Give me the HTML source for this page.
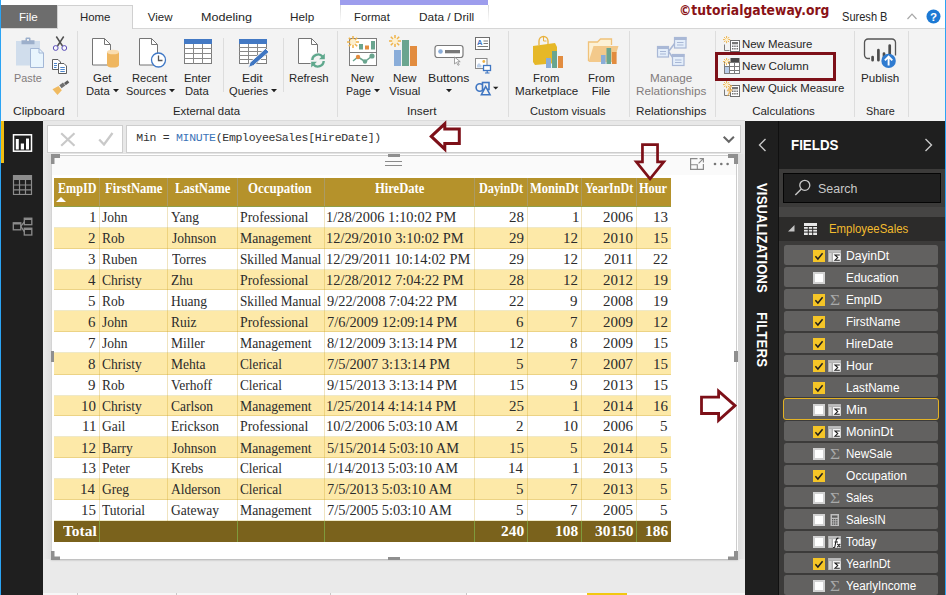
<!DOCTYPE html>
<html lang="en">
<head>
<meta charset="utf-8">
<title>Power BI Desktop - MINUTE function</title>
<style>
*{box-sizing:border-box;margin:0;padding:0}
html,body{width:946px;height:595px;overflow:hidden;background:#eaeaea}
body{position:relative;font-family:"Liberation Sans",sans-serif;font-size:12px;color:#262626}
#app{position:absolute;left:0;top:0;width:946px;height:595px;overflow:hidden}
#app div,#app span,#app svg{position:absolute}
.t{white-space:pre;line-height:20px;height:20px;transform-origin:0 50%}
.t b{font-weight:normal;color:#3b74b8}
/* ---------- ribbon ---------- */
#tabbar{left:0;top:0;width:946px;height:28px;background:#fff}
#tabline{left:0;top:28px;width:946px;height:1px;background:#d6d6d6}
#ribbon{left:0;top:29px;width:946px;height:92px;background:#f3f3f3}
#ribline{left:43px;top:120px;width:702px;height:1px;background:#dcdcdc}
#winl{left:0;top:0;width:1px;height:595px;background:#2ba4f4;z-index:50}
#winr{left:945px;top:0;width:1px;height:595px;background:#2ba4f4;z-index:50}
#t-file{left:1px;top:5px;width:56px;height:23px;background:#6d6d6d}
#t-home{left:57px;top:5px;width:76px;height:24px;background:#f3f3f3;border:1px solid #d0d0d0;border-bottom:none}
#ctx{left:340px;top:0;width:148px;height:5px;background:#9d9ded}
#ctxl{left:340px;top:5px;width:1px;height:18px;background:linear-gradient(#d8d8d8,#fff)}
#ctxr{left:488px;top:5px;width:1px;height:18px;background:linear-gradient(#d8d8d8,#fff)}
.sep{top:31px;width:1px;height:86px;background:#dddddd}
.sep2{top:38px;width:1px;height:54px;background:#dddddd}
#hl{left:715px;top:52px;width:121px;height:29px;border:3px solid #7d1018}
/* ---------- left nav ---------- */
#nav{left:1px;top:121px;width:42px;height:474px;background:#1f1f1f}
#navsel{left:1px;top:121px;width:3px;height:42px;background:#f0bd13}
/* ---------- formula ---------- */
#fbg{left:43px;top:121px;width:702px;height:33px;background:#e8e8e8}
#fx1{left:47px;top:125px;width:76px;height:28px;background:#fff;border:1px solid #cdcdcd}
#fx2{left:126px;top:125px;width:615px;height:28px;background:#fff;border:1px solid #cdcdcd}
/* ---------- canvas ---------- */
#page{left:43px;top:154px;width:702px;height:441px;background:#eaeaea}
#vis{left:51px;top:154px;width:687px;height:405px;background:#fff;box-shadow:0 1px 2px rgba(0,0,0,.25)}
#vish{left:52px;top:155px;width:684px;height:20px;background:#fafafa}
.hd{background:#8f8f8f}
/* table */
.th-bg{left:54px;top:178px;width:617px;height:29px;background:#b5922b;border-bottom:1px solid #8f9f48}
.alt{left:54px;width:617px;background:#fde9a8}
.tot{left:54px;width:617px;height:21px;background:#7a621c}
.vl{top:207px;width:1px;height:314px;background:rgba(196,150,10,.26)}
.hw{left:54px;width:617px;height:1px;background:#efe9c8}
.hb{left:54px;width:617px;height:1px;background:#ecd385}
.vlh{top:178px;width:1px;height:28px;background:#ab9b64}
.vlt{width:1px;height:21px;background:#7f9a3c}
.sort{left:56px;top:197px;width:0;height:0;border-left:5px solid transparent;border-right:5px solid transparent;border-bottom:5px solid #fff}
/* ---------- right panels ---------- */
#viz{left:745px;top:121px;width:33px;height:474px;background:#1f1f1f}
#vdiv{left:778px;top:121px;width:1px;height:474px;background:#101010}
#fp{left:779px;top:121px;width:167px;height:474px;background:#3c3b3a}
#fh{left:779px;top:121px;width:167px;height:48px;background:#1f1f1f}
#sb{left:783px;top:173px;width:158px;height:30px;background:#1f1f1f;border:1px solid #050505}
#fband{left:779px;top:207px;width:167px;height:10px;background:#464544}
#frow{left:779px;top:217px;width:167px;height:24px;background:#2c2b2a}
.vt{color:#fff;font-weight:bold;white-space:nowrap;transform-origin:0 0;height:20px;line-height:20px}
.fld{left:784px;width:154px;height:20px;background:#626160;border-radius:2.5px}
.fld.sel{border:1px solid #e3b224;left:783px;width:156px;height:22px;margin-top:-1px;border-radius:3px}
.cb{left:813px;width:12px;height:12px;background:#fff;border:2px solid #d2d2d2}
.cb.on{background:#f5c527;border:none}
</style>
</head>
<body>
<div id="app">
<div id="tabbar"></div><div id="tabline"></div>
<div id="ribbon"></div>
<div id="ribline"></div>
<div id="winl"></div><div id="winr"></div>
<div id="t-file"></div>
<div id="t-home"></div>
<div id="ctx"></div><div id="ctxl"></div><div id="ctxr"></div>
<!-- group separators -->
<div class="sep" style="left:77px"></div>
<div class="sep" style="left:337px"></div>
<div class="sep" style="left:508px"></div>
<div class="sep" style="left:629px"></div>
<div class="sep" style="left:715px"></div>
<div class="sep" style="left:854px"></div>
<div class="sep" style="left:908px"></div>
<div class="sep2" style="left:223px"></div>
<div class="sep2" style="left:283px"></div>
<div id="hl"></div>
<!-- title-bar right icons -->
<svg style="left:906px;top:12px" width="12" height="8" viewBox="0 0 12 8"><path d="M1.5 7L6 2.2 10.5 7" fill="none" stroke="#a8a8a8" stroke-width="1.2"/></svg>
<svg style="left:926px;top:9px" width="15" height="15" viewBox="0 0 15 15"><circle cx="7.5" cy="7.5" r="7" fill="#1c79d4"/><text x="7.5" y="11.6" text-anchor="middle" font-family="Liberation Sans, sans-serif" font-weight="bold" font-size="11.5" fill="#fff">?</text></svg>
<!-- ICONS -->
<!-- paste -->
<svg style="left:15px;top:37px" width="30" height="32" viewBox="0 0 30 32">
<rect x="1" y="4" width="24" height="24.500" fill="#d0ddec"/>
<path d="M6.500 3.200h4v-1.700a1 1 0 0 1 1-1h3a1 1 0 0 1 1 1v1.700h4v4h-13z" fill="#9cafcb"/><rect x="12" y="2" width="2" height="1.800" fill="#f3f3f3"/>
<path d="M15.500 11.500h8.500l4.500 4.500v14.500h-13z" fill="#e9f5fd" stroke="#a3b7d6"/>
<path d="M24 11.500v4.500h4.500" fill="none" stroke="#a3b7d6"/>
</svg>
<!-- scissors -->
<svg style="left:51px;top:35px" width="18" height="17" viewBox="0 0 18 17">
<path d="M5.300 1.500l6.200 9.500M12.700 1.500l-6.200 9.500" stroke="#505050" stroke-width="1.500" fill="none"/>
<circle cx="4.700" cy="13" r="2.400" fill="#f6f6fb" stroke="#5a4db8" stroke-width="1"/>
<circle cx="13.300" cy="13" r="2.400" fill="#f6f6fb" stroke="#5a4db8" stroke-width="1"/>
</svg>
<!-- copy -->
<svg style="left:51px;top:58px" width="18" height="17" viewBox="0 0 18 17">
<path d="M1.500 1.500h5.500l2.500 2.500v7.500h-8z" fill="#fff" stroke="#5f5f5f"/>
<path d="M3 5.500h3M3 7.500h3M3 9.500h2.500" stroke="#3b78c4" stroke-width=".9"/>
<path d="M7.500 5.500h5.500l2.500 2.500v7.500h-8z" fill="#fff" stroke="#5f5f5f"/>
<path d="M9.300 9.500h4.500M9.300 11.500h4.500M9.300 13.500h4.500" stroke="#3b78c4" stroke-width=".9"/>
</svg>
<!-- format painter -->
<svg style="left:51px;top:79px" width="19" height="17" viewBox="0 0 19 17">
<path d="M13 4l3.500-2.700 1.800 2.300-3.500 2.700z" fill="#5d5d5d"/>
<path d="M8.300 6.300l3.700-2.800 2.300 3-3.700 2.800z" fill="#6f6f6f"/>
<path d="M1.500 10.300l6-3.300 3.300 4.300-4.300 4.700z" fill="#f0ba60"/>
</svg>
<!-- get data -->
<svg style="left:90px;top:36px" width="32" height="33" viewBox="0 0 32 33">
<path d="M2.500 2.500h12l6 6v20.500h-18z" fill="#fff" stroke="#757575" stroke-width="1"/>
<path d="M14.500 2.500v6h6" fill="none" stroke="#757575" stroke-width="1"/>
<path d="M17 16v13c0 1.700 2.700 2.600 6 2.600s6-.9 6-2.600v-13z" fill="#efb65f"/>
<ellipse cx="23" cy="16" rx="6" ry="2.300" fill="#f9ddb0"/>
</svg>
<!-- recent sources -->
<svg style="left:137px;top:36px" width="32" height="33" viewBox="0 0 32 33">
<path d="M2.500 2.500h12l6 6v20.500h-18z" fill="#fff" stroke="#757575" stroke-width="1"/>
<path d="M14.500 2.500v6h6" fill="none" stroke="#757575" stroke-width="1"/>
<circle cx="21.500" cy="24" r="7" fill="#fff" stroke="#3f78c6" stroke-width="1.300"/>
<path d="M21.500 19.500v5h4" fill="none" stroke="#555" stroke-width="1.300"/>
</svg>
<!-- enter data -->
<svg style="left:183px;top:38px" width="30" height="27" viewBox="0 0 30 27">
<rect x="1.500" y="1.500" width="27" height="24" fill="#fff" stroke="#7d7d7d" stroke-width="1"/>
<rect x="1" y="1" width="28" height="5" fill="#4379c4"/>
<path d="M1 10.500h28M1 15.500h28M1 20.500h28M10.500 6v20M19.500 6v20" stroke="#8a8a8a" stroke-width="1"/>
</svg>
<!-- edit queries -->
<svg style="left:238px;top:38px" width="34" height="31" viewBox="0 0 34 31">
<rect x="1.500" y="1.500" width="27" height="24" fill="#fff" stroke="#7d7d7d" stroke-width="1"/>
<rect x="1" y="1" width="28" height="5" fill="#4379c4"/>
<path d="M1 9.500h28M1 13.500h28M1 17.500h28M1 21.500h28M10.500 6v20M19.500 6v20" stroke="#8a8a8a" stroke-width="1"/>
<path d="M27.500 10.500l3.500 3.500-15.500 13.500-5 2 1.500-5z" fill="#3f76c2" stroke="#f3f3f3" stroke-width="1"/>
</svg>
<!-- refresh -->
<svg style="left:296px;top:36px" width="32" height="33" viewBox="0 0 32 33">
<path d="M2.500 2.500h13l6 6v19h-19z" fill="#fff" stroke="#757575" stroke-width="1"/>
<path d="M15.500 2.500v6h6" fill="none" stroke="#757575" stroke-width="1"/>
<circle cx="22" cy="24.500" r="8" fill="#f3f3f3"/>
<path d="M16.300 24a5.800 5.800 0 0 1 10.200-3.500" fill="none" stroke="#5fa88d" stroke-width="2.400"/>
<path d="M27.700 25a5.800 5.800 0 0 1-10.200 3.500" fill="none" stroke="#5fa88d" stroke-width="2.400"/>
<path d="M28.800 17.500v5.700h-5.700z" fill="#5fa88d"/><path d="M15.200 31.500v-5.700h5.700z" fill="#5fa88d"/>
</svg>
<!-- new page -->
<svg style="left:347px;top:36px" width="33" height="32" viewBox="0 0 33 32">
<rect x="2.500" y="2.500" width="27" height="27" fill="#fff" stroke="#7d7d7d" stroke-width="1"/>
<path d="M2.500 16.500h27" stroke="#7d7d7d"/>
<rect x="12" y="8" width="4" height="5.500" fill="#6aa58f"/><rect x="18" y="9.500" width="4" height="4" fill="#e28c3f"/><rect x="24" y="5" width="4" height="8.500" fill="#6aa58f"/>
<path d="M6 25l5-4 7 4.500 7-5.500" fill="none" stroke="#6aa58f" stroke-width="1.500"/>
<circle cx="11" cy="21" r="2.200" fill="#e28c3f"/><circle cx="18" cy="25.500" r="2.200" fill="#6aa58f"/><circle cx="25" cy="20" r="2.600" fill="#6aa58f"/>
<g stroke="#efb347" stroke-width="1.500"><path d="M6 0v12M0 6h12M1.800 1.800l8.400 8.400M10.200 1.800l-8.400 8.400"/></g><circle cx="6" cy="6" r="2.900" fill="#fdf0cf"/>
</svg>
<!-- new visual -->
<svg style="left:389px;top:35px" width="32" height="32" viewBox="0 0 32 32">
<rect x="5" y="15" width="7" height="16" fill="#8aadd9"/><rect x="13" y="5" width="7" height="26" fill="#6aa58f"/><rect x="21" y="11" width="7" height="20" fill="#e28c3f"/>
<g stroke="#efb347" stroke-width="1.500"><path d="M6 0v12M0 6h12M1.800 1.800l8.400 8.400M10.200 1.800l-8.400 8.400"/></g><circle cx="6" cy="6" r="2.900" fill="#fdf0cf"/>
</svg>
<!-- buttons -->
<svg style="left:434px;top:44px" width="32" height="22" viewBox="0 0 32 22">
<rect x="1" y="1.500" width="28" height="12" rx="2.500" fill="#fff" stroke="#7a7a7a" stroke-width="1.200"/>
<circle cx="6.500" cy="7.500" r="2.300" fill="#8aadd9"/><rect x="11" y="6" width="15" height="3.300" fill="#7a7a7a"/>
<path d="M20.500 13v7l2-1.700 1.500 3 1.200-.6-1.500-3h2.500z" fill="#fff" stroke="#8a8a8a" stroke-width=".8"/>
</svg>
<!-- small insert icons -->
<svg style="left:475px;top:37px" width="16" height="13" viewBox="0 0 16 13">
<rect x=".5" y=".5" width="14" height="12" fill="#fff" stroke="#6e6e6e"/>
<text x="2" y="8" font-family="Liberation Sans, sans-serif" font-size="7.500" font-weight="bold" fill="#3f76c2">A</text>
<path d="M8.500 4h4.500M8.500 6.500h4.500M2.500 9.500h10.500" stroke="#7a7a7a" stroke-width="1"/>
</svg>
<svg style="left:475px;top:58px" width="17" height="16" viewBox="0 0 17 16">
<rect x=".5" y=".5" width="11.500" height="10" fill="#fff" stroke="#8a8a8a"/>
<circle cx="8.800" cy="3.500" r="1.400" fill="#efb347"/><path d="M2 9.500v-2.500l2-2 2.500 2.500v2z" fill="#bfd2ea"/>
<rect x="8.500" y="7.500" width="7" height="5" fill="#fff" stroke="#3f76c2" stroke-width="1.300"/><path d="M10 15h4.500M12.200 12.500v2.500" stroke="#3f76c2" stroke-width="1.200"/>
</svg>
<svg style="left:475px;top:81px" width="24" height="15" viewBox="0 0 24 15">
<circle cx="4.800" cy="6.500" r="3.700" fill="none" stroke="#3f76c2" stroke-width="1.600"/>
<rect x="7.500" y="1.500" width="6.500" height="7" fill="#f3f3f3" stroke="#3f76c2" stroke-width="1.600"/>
<path d="M10.700 5.500l4.300 8.200h-8.600z" fill="#f3f3f3" stroke="#3f76c2" stroke-width="1.600"/>
<path d="M18 5.800h5.400l-2.700 2.700z" fill="#222"/>
</svg>
<!-- marketplace -->
<svg style="left:531px;top:34px" width="33" height="35" viewBox="0 0 33 35">
<path d="M8 11v-4a4.500 4.500 0 0 1 9 0v4" fill="none" stroke="#e9b23e" stroke-width="1.300"/>
<path d="M12.500 3v4h3" fill="none" stroke="#e9b23e" stroke-width="1"/>
<path d="M2 12l22-3 2 4v16l-22 2-2-3z" fill="#e6b828"/>
<rect x="15" y="24" width="5" height="10" fill="#8aadd9"/><rect x="21" y="17" width="5" height="17" fill="#6aa58f"/><rect x="27" y="22" width="5" height="12" fill="#e28c3f"/>
</svg>
<!-- from file -->
<svg style="left:587px;top:38px" width="33" height="28" viewBox="0 0 33 28">
<path d="M1.500 23v-19h9l3-3h11v6" fill="#fdf1d6" stroke="#f0c27a" stroke-width="1.300"/>
<path d="M1.500 24l5-16h25l-5 16z" fill="#f3c98b"/>
<rect x="14" y="17" width="4.600" height="9" fill="#8aadd9"/><rect x="19.500" y="10" width="4.600" height="16" fill="#6aa58f"/><rect x="25" y="14" width="4.600" height="12" fill="#e28c3f"/>
</svg>
<!-- manage relationships -->
<svg style="left:656px;top:36px" width="32" height="31" viewBox="0 0 32 31">
<path d="M12.500 15.500l6.500-8.500M12.500 15.500l6 8.500" fill="none" stroke="#a9b8d6" stroke-width="1.600"/>
<g fill="#e4eefa" stroke="#a9b8d6" stroke-width="1.200"><rect x="1.500" y="10.500" width="11" height="10.500"/><rect x="18.500" y="1.500" width="11.500" height="10.500"/><rect x="16.500" y="18.500" width="11.500" height="11"/></g>
<g fill="#a9b8d6"><rect x="1" y="10" width="12" height="3"/><rect x="18" y="1" width="12.500" height="3"/><rect x="16" y="18" width="12.500" height="3"/></g>
<path d="M4 15.500h6M4 18h6M21 6.500h6.500M21 9h6.500M19 24h6.500M19 26.500h6.500" stroke="#a9b8d6" stroke-width="1"/>
</svg>
<!-- new measure -->
<svg style="left:723px;top:36px" width="17" height="16" viewBox="0 0 17 16"><path d="M1.500 8.500v6h5" fill="none" stroke="#7a7a7a"/><rect x="7.500" y="4.500" width="9" height="11" fill="#fff" stroke="#6e6e6e"/><rect x="9" y="6" width="6" height="2.300" fill="#777"/><g fill="#777"><rect x="9" y="9.500" width="1.500" height="1.500"/><rect x="11.200" y="9.500" width="1.500" height="1.500"/><rect x="13.500" y="9.500" width="1.500" height="1.500"/><rect x="9" y="12" width="1.500" height="1.500"/><rect x="11.200" y="12" width="1.500" height="1.500"/><rect x="13.500" y="12" width="1.500" height="1.500"/></g><g stroke="#efb347" stroke-width="1"><path d="M3.600 0v7.200M0 3.600h7.200M1.100 1.100l5 5M6.100 1.100l-5 5"/></g><circle cx="3.600" cy="3.600" r="1.700" fill="#fdf0cf"/></svg>
<!-- new column -->
<svg style="left:723px;top:58px" width="17" height="16" viewBox="0 0 17 16"><rect x="1.500" y="4.500" width="15" height="11" fill="#fff" stroke="#7a7a7a"/><path d="M1.500 8.500h15M1.500 12.500h15M6.500 4.500v11M11.500 4.500v11" stroke="#7a7a7a"/><rect x="2" y="9" width="4" height="6" fill="#b9cce8"/><rect x="7.500" y="0" width="9" height="4" fill="#4a4a4a"/><g stroke="#efb347" stroke-width="1"><path d="M3.600 0v7.200M0 3.600h7.200M1.100 1.100l5 5M6.100 1.100l-5 5"/></g><circle cx="3.600" cy="3.600" r="1.700" fill="#fdf0cf"/></svg>
<!-- new quick measure -->
<svg style="left:723px;top:81px" width="17" height="16" viewBox="0 0 17 16"><path d="M1.500 8.500v6h5" fill="none" stroke="#7a7a7a"/><rect x="7.500" y="4.500" width="9" height="11" fill="#fff" stroke="#6e6e6e"/><rect x="9" y="6" width="6" height="2.300" fill="#777"/><g fill="#777"><rect x="9" y="9.500" width="1.500" height="1.500"/><rect x="11.200" y="9.500" width="1.500" height="1.500"/><rect x="13.500" y="9.500" width="1.500" height="1.500"/><rect x="9" y="12" width="1.500" height="1.500"/><rect x="11.200" y="12" width="1.500" height="1.500"/><rect x="13.500" y="12" width="1.500" height="1.500"/></g><path d="M7.500 4.500l-3.500 5.500h2.500l-2 5 5-6.500h-2.500l2-4z" fill="#f3c77c" stroke="#e0a445" stroke-width=".5"/><g stroke="#efb347" stroke-width="1"><path d="M3.600 0v7.200M0 3.600h7.200M1.100 1.100l5 5M6.100 1.100l-5 5"/></g><circle cx="3.600" cy="3.600" r="1.700" fill="#fdf0cf"/></svg>
<!-- publish -->
<svg style="left:863px;top:37px" width="35" height="32" viewBox="0 0 35 32">
<path d="M7 21.500h-2a3.500 3.500 0 0 1-3.500-3.500v-12.500a3.500 3.500 0 0 1 3.500-3.500h24a3.500 3.500 0 0 1 3.500 3.500v13" fill="none" stroke="#555" stroke-width="1.300"/>
<g stroke="#4d4d4d" stroke-width="2.700" stroke-linecap="round"><path d="M9.600 20v3.200M15.400 13.200v10M21 16.500v6.700M26.700 8.500v9"/></g>
<circle cx="25.600" cy="23.900" r="7.200" fill="#2f7bd0"/>
<path d="M25.600 28.500v-8.500M21.900 23.300l3.700-3.800 3.700 3.800" fill="none" stroke="#fff" stroke-width="1.900"/>
</svg>

<span class="t" style="left:13.64px;top:68.00px;font-family:'Liberation Sans',sans-serif;font-size:11.5px;font-weight:normal;color:#827b7b;transform:scaleX(0.9399);">Paste</span>
<span class="t" style="left:92.98px;top:68.00px;font-family:'Liberation Sans',sans-serif;font-size:11.5px;font-weight:normal;color:#262626;transform:scaleX(0.9934);">Get</span>
<span class="t" style="left:85.81px;top:80.80px;font-family:'Liberation Sans',sans-serif;font-size:11.5px;font-weight:normal;color:#262626;transform:scaleX(0.9754);">Data</span>
<span class="t" style="left:131.82px;top:68.00px;font-family:'Liberation Sans',sans-serif;font-size:11.5px;font-weight:normal;color:#262626;transform:scaleX(0.9682);">Recent</span>
<span class="t" style="left:125.97px;top:80.80px;font-family:'Liberation Sans',sans-serif;font-size:11.5px;font-weight:normal;color:#262626;transform:scaleX(0.9477);">Sources</span>
<span class="t" style="left:184.11px;top:68.00px;font-family:'Liberation Sans',sans-serif;font-size:11.5px;font-weight:normal;color:#262626;transform:scaleX(0.9825);">Enter</span>
<span class="t" style="left:184.91px;top:80.80px;font-family:'Liberation Sans',sans-serif;font-size:11.5px;font-weight:normal;color:#262626;transform:scaleX(0.9754);">Data</span>
<span class="t" style="left:241.56px;top:68.00px;font-family:'Liberation Sans',sans-serif;font-size:11.5px;font-weight:normal;color:#262626;transform:scaleX(1.0397);">Edit</span>
<span class="t" style="left:228.93px;top:80.80px;font-family:'Liberation Sans',sans-serif;font-size:11.5px;font-weight:normal;color:#262626;transform:scaleX(0.9687);">Queries</span>
<span class="t" style="left:288.61px;top:68.00px;font-family:'Liberation Sans',sans-serif;font-size:11.5px;font-weight:normal;color:#262626;transform:scaleX(0.9843);">Refresh</span>
<span class="t" style="left:350.79px;top:68.00px;font-family:'Liberation Sans',sans-serif;font-size:11.5px;font-weight:normal;color:#262626;">New</span>
<span class="t" style="left:345.86px;top:80.80px;font-family:'Liberation Sans',sans-serif;font-size:11.5px;font-weight:normal;color:#262626;transform:scaleX(0.9236);">Page</span>
<span class="t" style="left:392.78px;top:68.00px;font-family:'Liberation Sans',sans-serif;font-size:11.5px;font-weight:normal;color:#262626;transform:scaleX(1.0169);">New</span>
<span class="t" style="left:389.25px;top:80.80px;font-family:'Liberation Sans',sans-serif;font-size:11.5px;font-weight:normal;color:#262626;">Visual</span>
<span class="t" style="left:427.74px;top:68.00px;font-family:'Liberation Sans',sans-serif;font-size:11.5px;font-weight:normal;color:#262626;transform:scaleX(1.0625);">Buttons</span>
<span class="t" style="left:532.71px;top:68.00px;font-family:'Liberation Sans',sans-serif;font-size:11.5px;font-weight:normal;color:#262626;transform:scaleX(0.9814);">From</span>
<span class="t" style="left:514.78px;top:80.80px;font-family:'Liberation Sans',sans-serif;font-size:11.5px;font-weight:normal;color:#262626;transform:scaleX(1.0111);">Marketplace</span>
<span class="t" style="left:587.70px;top:68.00px;font-family:'Liberation Sans',sans-serif;font-size:11.5px;font-weight:normal;color:#262626;transform:scaleX(0.9932);">From</span>
<span class="t" style="left:591.69px;top:80.80px;font-family:'Liberation Sans',sans-serif;font-size:11.5px;font-weight:normal;color:#262626;">File</span>
<span class="t" style="left:649.78px;top:68.00px;font-family:'Liberation Sans',sans-serif;font-size:11.5px;font-weight:normal;color:#827b7b;transform:scaleX(1.0144);">Manage</span>
<span class="t" style="left:635.58px;top:80.80px;font-family:'Liberation Sans',sans-serif;font-size:11.5px;font-weight:normal;color:#827b7b;transform:scaleX(1.0187);">Relationships</span>
<span class="t" style="left:741.70px;top:34.00px;font-family:'Liberation Sans',sans-serif;font-size:11.5px;font-weight:normal;color:#262626;transform:scaleX(0.9918);">New Measure</span>
<span class="t" style="left:741.68px;top:55.80px;font-family:'Liberation Sans',sans-serif;font-size:11.5px;font-weight:normal;color:#262626;transform:scaleX(1.0144);">New Column</span>
<span class="t" style="left:741.70px;top:78.00px;font-family:'Liberation Sans',sans-serif;font-size:11.5px;font-weight:normal;color:#262626;transform:scaleX(0.9891);">New Quick Measure</span>
<span class="t" style="left:860.78px;top:68.00px;font-family:'Liberation Sans',sans-serif;font-size:11.5px;font-weight:normal;color:#262626;transform:scaleX(1.0151);">Publish</span>
<span class="t" style="left:12.95px;top:101.00px;font-family:'Liberation Sans',sans-serif;font-size:11.5px;font-weight:normal;color:#262626;transform:scaleX(1.0482);">Clipboard</span>
<span class="t" style="left:172.70px;top:101.00px;font-family:'Liberation Sans',sans-serif;font-size:11.5px;font-weight:normal;color:#262626;transform:scaleX(0.9880);">External data</span>
<span class="t" style="left:406.59px;top:101.00px;font-family:'Liberation Sans',sans-serif;font-size:11.5px;font-weight:normal;color:#262626;transform:scaleX(1.0227);">Insert</span>
<span class="t" style="left:530.29px;top:101.00px;font-family:'Liberation Sans',sans-serif;font-size:11.5px;font-weight:normal;color:#262626;transform:scaleX(0.9700);">Custom visuals</span>
<span class="t" style="left:635.58px;top:101.00px;font-family:'Liberation Sans',sans-serif;font-size:11.5px;font-weight:normal;color:#262626;transform:scaleX(1.0187);">Relationships</span>
<span class="t" style="left:752.18px;top:101.00px;font-family:'Liberation Sans',sans-serif;font-size:11.5px;font-weight:normal;color:#262626;">Calculations</span>
<span class="t" style="left:866.08px;top:101.00px;font-family:'Liberation Sans',sans-serif;font-size:11.5px;font-weight:normal;color:#262626;transform:scaleX(0.9407);">Share</span>
<span class="t" style="left:19.49px;top:7.10px;font-family:'Liberation Sans',sans-serif;font-size:11.5px;font-weight:normal;color:#fff;transform:scaleX(1.0106);">File</span>
<span class="t" style="left:79.90px;top:7.10px;font-family:'Liberation Sans',sans-serif;font-size:11.5px;font-weight:normal;color:#262626;transform:scaleX(0.9927);">Home</span>
<span class="t" style="left:147.85px;top:7.10px;font-family:'Liberation Sans',sans-serif;font-size:11.5px;font-weight:normal;color:#262626;">View</span>
<span class="t" style="left:201.42px;top:7.10px;font-family:'Liberation Sans',sans-serif;font-size:11.5px;font-weight:normal;color:#262626;transform:scaleX(1.0917);">Modeling</span>
<span class="t" style="left:289.78px;top:7.10px;font-family:'Liberation Sans',sans-serif;font-size:11.5px;font-weight:normal;color:#262626;transform:scaleX(1.0215);">Help</span>
<span class="t" style="left:353.91px;top:7.10px;font-family:'Liberation Sans',sans-serif;font-size:11.5px;font-weight:normal;color:#262626;transform:scaleX(0.9823);">Format</span>
<span class="t" style="left:418.97px;top:7.10px;font-family:'Liberation Sans',sans-serif;font-size:11.5px;font-weight:normal;color:#262626;transform:scaleX(1.0289);">Data / Drill</span>
<svg style="left:112.5px;top:89.4px" width="6" height="4" viewBox="0 0 6 4"><path d="M0 0h6l-3 3.200z" fill="#1f1f1f"/></svg>
<svg style="left:168.5px;top:89.4px" width="6" height="4" viewBox="0 0 6 4"><path d="M0 0h6l-3 3.200z" fill="#1f1f1f"/></svg>
<svg style="left:270.7px;top:89.4px" width="6" height="4" viewBox="0 0 6 4"><path d="M0 0h6l-3 3.200z" fill="#1f1f1f"/></svg>
<svg style="left:373.6px;top:89.4px" width="6" height="4" viewBox="0 0 6 4"><path d="M0 0h6l-3 3.200z" fill="#1f1f1f"/></svg>
<svg style="left:445.5px;top:88.9px" width="6" height="4" viewBox="0 0 6 4"><path d="M0 0h6l-3 3.200z" fill="#1f1f1f"/></svg>
<span class="t" style="left:841.61px;top:6.60px;font-family:'Liberation Sans',sans-serif;font-size:12.5px;font-weight:normal;color:#262626;transform:scaleX(0.8847);">Suresh B</span>
<span class="t" style="left:679.35px;top:0.90px;font-family:'DejaVu Sans','Liberation Sans',sans-serif;font-size:13.4px;font-weight:bold;color:#8a1216;transform:scaleX(0.9239);">&copy;tutorialgateway.org</span>
<!-- left nav -->
<div id="nav"></div><div id="navsel"></div>
<svg style="left:12px;top:134px" width="21" height="18" viewBox="0 0 21 18">
<rect x="1.500" y=".8" width="18" height="16.400" fill="none" stroke="#fff" stroke-width="1.500"/>
<rect x="3.800" y="5" width="3" height="10.500" fill="#fff"/><rect x="8.800" y="9.500" width="3.200" height="6" fill="#fff"/><rect x="14" y="4.500" width="3" height="11" fill="#fff"/>
</svg>
<svg style="left:12px;top:175px" width="21" height="20" viewBox="0 0 21 20">
<rect x="1.500" y=".5" width="18" height="19" fill="none" stroke="#8c8c8c" stroke-width="1.200"/>
<rect x="1.500" y=".5" width="18" height="4.500" fill="#8c8c8c"/>
<path d="M1.500 10h18M1.500 14.800h18M7.500 5v14.500M13.500 5v14.500" stroke="#8c8c8c" stroke-width="1.200" fill="none"/>
</svg>
<svg style="left:12px;top:217px" width="21" height="20" viewBox="0 0 21 20">
<g fill="none" stroke="#8c8c8c" stroke-width="1.300"><rect x="1.300" y="5.800" width="7.500" height="7"/><rect x="12.300" y="1.200" width="7.500" height="6.500"/><rect x="12.300" y="11.200" width="7.500" height="6.800"/>
<path d="M8.800 9.300l3.500-4.300M8.800 9.300l3.500 5.300"/></g>
<path d="M1.300 5.800h7.500v1.800h-7.500zM12.300 1.200h7.500v1.800h-7.500zM12.300 11.200h7.500v1.800h-7.500z" fill="#8c8c8c"/>
</svg>

<!-- formula bar -->
<div id="fbg"></div>
<div id="fx1"></div><div id="fx2"></div>
<span class="t" style="left:136.37px;top:127.50px;font-family:'Liberation Mono',monospace;font-size:11.5px;font-weight:normal;color:#333;letter-spacing:-0.292px;white-space:pre;">Min = <b>MINUTE</b>(EmployeeSales[HireDate])</span>
<!-- canvas -->
<div id="page"></div>
<div id="vis"></div><div id="vish"></div>
<div class="th-bg"></div>
<span class="t" style="left:57.69px;top:178.90px;font-family:'Liberation Serif',serif;font-size:13.9px;font-weight:bold;color:#fff;transform:scaleX(0.8728);">EmpID</span>
<span class="t" style="left:104.87px;top:178.90px;font-family:'Liberation Serif',serif;font-size:13.9px;font-weight:bold;color:#fff;transform:scaleX(0.9068);">FirstName</span>
<span class="t" style="left:174.77px;top:178.90px;font-family:'Liberation Serif',serif;font-size:13.9px;font-weight:bold;color:#fff;transform:scaleX(0.9097);">LastName</span>
<span class="t" style="left:248.42px;top:178.90px;font-family:'Liberation Serif',serif;font-size:13.9px;font-weight:bold;color:#fff;transform:scaleX(0.9279);">Occupation</span>
<span class="t" style="left:374.97px;top:178.90px;font-family:'Liberation Serif',serif;font-size:13.9px;font-weight:bold;color:#fff;transform:scaleX(0.9050);">HireDate</span>
<span class="t" style="left:478.99px;top:178.90px;font-family:'Liberation Serif',serif;font-size:13.9px;font-weight:bold;color:#fff;transform:scaleX(0.8803);">DayinDt</span>
<span class="t" style="left:529.68px;top:178.90px;font-family:'Liberation Serif',serif;font-size:13.9px;font-weight:bold;color:#fff;transform:scaleX(0.9023);">MoninDt</span>
<span class="t" style="left:584.69px;top:178.90px;font-family:'Liberation Serif',serif;font-size:13.9px;font-weight:bold;color:#fff;transform:scaleX(0.8679);">YearInDt</span>
<span class="t" style="left:638.78px;top:178.90px;font-family:'Liberation Serif',serif;font-size:13.9px;font-weight:bold;color:#fff;transform:scaleX(0.8877);">Hour</span>
<div class="sort"></div>
<div class="hw" style="top:227px"></div>
<span class="t" style="left:89.30px;top:208.00px;font-family:'Liberation Serif',serif;font-size:14.0px;font-weight:normal;color:#2b2b2b;transform:scaleX(1.0679);">1</span>
<span class="t" style="left:102.23px;top:208.00px;font-family:'Liberation Serif',serif;font-size:14.0px;font-weight:normal;color:#2b2b2b;transform:scaleX(0.9659);">John</span>
<span class="t" style="left:171.31px;top:208.00px;font-family:'Liberation Serif',serif;font-size:14.0px;font-weight:normal;color:#2b2b2b;transform:scaleX(0.9659);">Yang</span>
<span class="t" style="left:239.94px;top:208.00px;font-family:'Liberation Serif',serif;font-size:14.0px;font-weight:normal;color:#2b2b2b;transform:scaleX(0.9856);">Professional</span>
<span class="t" style="left:326.10px;top:208.00px;font-family:'Liberation Serif',serif;font-size:14.0px;font-weight:normal;color:#2b2b2b;transform:scaleX(1.0281);">1/28/2006 1:10:02 PM</span>
<span class="t" style="left:508.62px;top:208.00px;font-family:'Liberation Serif',serif;font-size:14.0px;font-weight:normal;color:#2b2b2b;transform:scaleX(1.0679);">28</span>
<span class="t" style="left:571.50px;top:208.00px;font-family:'Liberation Serif',serif;font-size:14.0px;font-weight:normal;color:#2b2b2b;transform:scaleX(1.0679);">1</span>
<span class="t" style="left:602.83px;top:208.00px;font-family:'Liberation Serif',serif;font-size:14.0px;font-weight:normal;color:#2b2b2b;transform:scaleX(1.0679);">2006</span>
<span class="t" style="left:652.99px;top:208.00px;font-family:'Liberation Serif',serif;font-size:14.0px;font-weight:normal;color:#2b2b2b;transform:scaleX(1.0679);">13</span>
<div class="alt" style="top:228px;height:21px"></div>
<div class="hb" style="top:248px"></div>
<span class="t" style="left:88.43px;top:228.80px;font-family:'Liberation Serif',serif;font-size:14.0px;font-weight:normal;color:#2b2b2b;transform:scaleX(1.0679);">2</span>
<span class="t" style="left:101.85px;top:228.80px;font-family:'Liberation Serif',serif;font-size:14.0px;font-weight:normal;color:#2b2b2b;transform:scaleX(0.9659);">Rob</span>
<span class="t" style="left:171.53px;top:228.80px;font-family:'Liberation Serif',serif;font-size:14.0px;font-weight:normal;color:#2b2b2b;transform:scaleX(0.9659);">Johnson</span>
<span class="t" style="left:239.94px;top:228.80px;font-family:'Liberation Serif',serif;font-size:14.0px;font-weight:normal;color:#2b2b2b;transform:scaleX(0.9797);">Management</span>
<span class="t" style="left:326.10px;top:228.80px;font-family:'Liberation Serif',serif;font-size:14.0px;font-weight:normal;color:#2b2b2b;transform:scaleX(1.0281);">12/29/2010 3:10:02 PM</span>
<span class="t" style="left:508.66px;top:228.80px;font-family:'Liberation Serif',serif;font-size:14.0px;font-weight:normal;color:#2b2b2b;transform:scaleX(1.0679);">29</span>
<span class="t" style="left:563.15px;top:228.80px;font-family:'Liberation Serif',serif;font-size:14.0px;font-weight:normal;color:#2b2b2b;transform:scaleX(1.0679);">12</span>
<span class="t" style="left:602.97px;top:228.80px;font-family:'Liberation Serif',serif;font-size:14.0px;font-weight:normal;color:#2b2b2b;transform:scaleX(1.0679);">2010</span>
<span class="t" style="left:652.99px;top:228.80px;font-family:'Liberation Serif',serif;font-size:14.0px;font-weight:normal;color:#2b2b2b;transform:scaleX(1.0679);">15</span>
<div class="hw" style="top:269px"></div>
<span class="t" style="left:88.26px;top:250.00px;font-family:'Liberation Serif',serif;font-size:14.0px;font-weight:normal;color:#2b2b2b;transform:scaleX(1.0679);">3</span>
<span class="t" style="left:101.85px;top:250.00px;font-family:'Liberation Serif',serif;font-size:14.0px;font-weight:normal;color:#2b2b2b;transform:scaleX(0.9659);">Ruben</span>
<span class="t" style="left:171.64px;top:250.00px;font-family:'Liberation Serif',serif;font-size:14.0px;font-weight:normal;color:#2b2b2b;transform:scaleX(0.9659);">Torres</span>
<span class="t" style="left:239.81px;top:250.00px;font-family:'Liberation Serif',serif;font-size:14.0px;font-weight:normal;color:#2b2b2b;transform:scaleX(0.9446);">Skilled Manual</span>
<span class="t" style="left:326.10px;top:250.00px;font-family:'Liberation Serif',serif;font-size:14.0px;font-weight:normal;color:#2b2b2b;transform:scaleX(1.0281);">12/29/2011 10:14:02 PM</span>
<span class="t" style="left:508.66px;top:250.00px;font-family:'Liberation Serif',serif;font-size:14.0px;font-weight:normal;color:#2b2b2b;transform:scaleX(1.0679);">29</span>
<span class="t" style="left:563.15px;top:250.00px;font-family:'Liberation Serif',serif;font-size:14.0px;font-weight:normal;color:#2b2b2b;transform:scaleX(1.0679);">12</span>
<span class="t" style="left:604.27px;top:250.00px;font-family:'Liberation Serif',serif;font-size:14.0px;font-weight:normal;color:#2b2b2b;transform:scaleX(1.0679);">2011</span>
<span class="t" style="left:653.15px;top:250.00px;font-family:'Liberation Serif',serif;font-size:14.0px;font-weight:normal;color:#2b2b2b;transform:scaleX(1.0679);">22</span>
<div class="alt" style="top:270px;height:20px"></div>
<div class="hb" style="top:289px"></div>
<span class="t" style="left:87.82px;top:270.90px;font-family:'Liberation Serif',serif;font-size:14.0px;font-weight:normal;color:#2b2b2b;transform:scaleX(1.0679);">4</span>
<span class="t" style="left:102.00px;top:270.90px;font-family:'Liberation Serif',serif;font-size:14.0px;font-weight:normal;color:#2b2b2b;transform:scaleX(0.9659);">Christy</span>
<span class="t" style="left:171.22px;top:270.90px;font-family:'Liberation Serif',serif;font-size:14.0px;font-weight:normal;color:#2b2b2b;transform:scaleX(0.9659);">Zhu</span>
<span class="t" style="left:239.94px;top:270.90px;font-family:'Liberation Serif',serif;font-size:14.0px;font-weight:normal;color:#2b2b2b;transform:scaleX(0.9856);">Professional</span>
<span class="t" style="left:326.10px;top:270.90px;font-family:'Liberation Serif',serif;font-size:14.0px;font-weight:normal;color:#2b2b2b;transform:scaleX(1.0281);">12/28/2012 7:04:22 PM</span>
<span class="t" style="left:508.62px;top:270.90px;font-family:'Liberation Serif',serif;font-size:14.0px;font-weight:normal;color:#2b2b2b;transform:scaleX(1.0679);">28</span>
<span class="t" style="left:563.15px;top:270.90px;font-family:'Liberation Serif',serif;font-size:14.0px;font-weight:normal;color:#2b2b2b;transform:scaleX(1.0679);">12</span>
<span class="t" style="left:603.20px;top:270.90px;font-family:'Liberation Serif',serif;font-size:14.0px;font-weight:normal;color:#2b2b2b;transform:scaleX(1.0679);">2012</span>
<span class="t" style="left:652.96px;top:270.90px;font-family:'Liberation Serif',serif;font-size:14.0px;font-weight:normal;color:#2b2b2b;transform:scaleX(1.0679);">19</span>
<div class="hw" style="top:310px"></div>
<span class="t" style="left:88.27px;top:291.50px;font-family:'Liberation Serif',serif;font-size:14.0px;font-weight:normal;color:#2b2b2b;transform:scaleX(1.0679);">5</span>
<span class="t" style="left:101.85px;top:291.50px;font-family:'Liberation Serif',serif;font-size:14.0px;font-weight:normal;color:#2b2b2b;transform:scaleX(0.9659);">Rob</span>
<span class="t" style="left:171.23px;top:291.50px;font-family:'Liberation Serif',serif;font-size:14.0px;font-weight:normal;color:#2b2b2b;transform:scaleX(0.9659);">Huang</span>
<span class="t" style="left:239.81px;top:291.50px;font-family:'Liberation Serif',serif;font-size:14.0px;font-weight:normal;color:#2b2b2b;transform:scaleX(0.9446);">Skilled Manual</span>
<span class="t" style="left:327.24px;top:291.50px;font-family:'Liberation Serif',serif;font-size:14.0px;font-weight:normal;color:#2b2b2b;transform:scaleX(1.0281);">9/22/2008 7:04:22 PM</span>
<span class="t" style="left:508.85px;top:291.50px;font-family:'Liberation Serif',serif;font-size:14.0px;font-weight:normal;color:#2b2b2b;transform:scaleX(1.0679);">22</span>
<span class="t" style="left:570.43px;top:291.50px;font-family:'Liberation Serif',serif;font-size:14.0px;font-weight:normal;color:#2b2b2b;transform:scaleX(1.0679);">9</span>
<span class="t" style="left:602.97px;top:291.50px;font-family:'Liberation Serif',serif;font-size:14.0px;font-weight:normal;color:#2b2b2b;transform:scaleX(1.0679);">2008</span>
<span class="t" style="left:652.96px;top:291.50px;font-family:'Liberation Serif',serif;font-size:14.0px;font-weight:normal;color:#2b2b2b;transform:scaleX(1.0679);">19</span>
<div class="alt" style="top:311px;height:21px"></div>
<div class="hb" style="top:331px"></div>
<span class="t" style="left:88.06px;top:312.60px;font-family:'Liberation Serif',serif;font-size:14.0px;font-weight:normal;color:#2b2b2b;transform:scaleX(1.0679);">6</span>
<span class="t" style="left:102.23px;top:312.60px;font-family:'Liberation Serif',serif;font-size:14.0px;font-weight:normal;color:#2b2b2b;transform:scaleX(0.9659);">John</span>
<span class="t" style="left:171.15px;top:312.60px;font-family:'Liberation Serif',serif;font-size:14.0px;font-weight:normal;color:#2b2b2b;transform:scaleX(0.9659);">Ruiz</span>
<span class="t" style="left:239.94px;top:312.60px;font-family:'Liberation Serif',serif;font-size:14.0px;font-weight:normal;color:#2b2b2b;transform:scaleX(0.9856);">Professional</span>
<span class="t" style="left:326.87px;top:312.60px;font-family:'Liberation Serif',serif;font-size:14.0px;font-weight:normal;color:#2b2b2b;transform:scaleX(1.0281);">7/6/2009 12:09:14 PM</span>
<span class="t" style="left:515.96px;top:312.60px;font-family:'Liberation Serif',serif;font-size:14.0px;font-weight:normal;color:#2b2b2b;transform:scaleX(1.0679);">6</span>
<span class="t" style="left:570.24px;top:312.60px;font-family:'Liberation Serif',serif;font-size:14.0px;font-weight:normal;color:#2b2b2b;transform:scaleX(1.0679);">7</span>
<span class="t" style="left:603.01px;top:312.60px;font-family:'Liberation Serif',serif;font-size:14.0px;font-weight:normal;color:#2b2b2b;transform:scaleX(1.0679);">2009</span>
<span class="t" style="left:653.15px;top:312.60px;font-family:'Liberation Serif',serif;font-size:14.0px;font-weight:normal;color:#2b2b2b;transform:scaleX(1.0679);">12</span>
<div class="hw" style="top:352px"></div>
<span class="t" style="left:88.04px;top:333.80px;font-family:'Liberation Serif',serif;font-size:14.0px;font-weight:normal;color:#2b2b2b;transform:scaleX(1.0679);">7</span>
<span class="t" style="left:102.23px;top:333.80px;font-family:'Liberation Serif',serif;font-size:14.0px;font-weight:normal;color:#2b2b2b;transform:scaleX(0.9659);">John</span>
<span class="t" style="left:171.15px;top:333.80px;font-family:'Liberation Serif',serif;font-size:14.0px;font-weight:normal;color:#2b2b2b;transform:scaleX(0.9659);">Miller</span>
<span class="t" style="left:239.94px;top:333.80px;font-family:'Liberation Serif',serif;font-size:14.0px;font-weight:normal;color:#2b2b2b;transform:scaleX(0.9797);">Management</span>
<span class="t" style="left:327.20px;top:333.80px;font-family:'Liberation Serif',serif;font-size:14.0px;font-weight:normal;color:#2b2b2b;transform:scaleX(1.0281);">8/12/2009 3:13:14 PM</span>
<span class="t" style="left:508.85px;top:333.80px;font-family:'Liberation Serif',serif;font-size:14.0px;font-weight:normal;color:#2b2b2b;transform:scaleX(1.0679);">12</span>
<span class="t" style="left:570.40px;top:333.80px;font-family:'Liberation Serif',serif;font-size:14.0px;font-weight:normal;color:#2b2b2b;transform:scaleX(1.0679);">8</span>
<span class="t" style="left:603.01px;top:333.80px;font-family:'Liberation Serif',serif;font-size:14.0px;font-weight:normal;color:#2b2b2b;transform:scaleX(1.0679);">2009</span>
<span class="t" style="left:652.99px;top:333.80px;font-family:'Liberation Serif',serif;font-size:14.0px;font-weight:normal;color:#2b2b2b;transform:scaleX(1.0679);">15</span>
<div class="alt" style="top:353px;height:22px"></div>
<div class="hb" style="top:374px"></div>
<span class="t" style="left:88.20px;top:354.70px;font-family:'Liberation Serif',serif;font-size:14.0px;font-weight:normal;color:#2b2b2b;transform:scaleX(1.0679);">8</span>
<span class="t" style="left:102.00px;top:354.70px;font-family:'Liberation Serif',serif;font-size:14.0px;font-weight:normal;color:#2b2b2b;transform:scaleX(0.9659);">Christy</span>
<span class="t" style="left:171.15px;top:354.70px;font-family:'Liberation Serif',serif;font-size:14.0px;font-weight:normal;color:#2b2b2b;transform:scaleX(0.9659);">Mehta</span>
<span class="t" style="left:240.11px;top:354.70px;font-family:'Liberation Serif',serif;font-size:14.0px;font-weight:normal;color:#2b2b2b;transform:scaleX(0.9464);">Clerical</span>
<span class="t" style="left:326.87px;top:354.70px;font-family:'Liberation Serif',serif;font-size:14.0px;font-weight:normal;color:#2b2b2b;transform:scaleX(1.0281);">7/5/2007 3:13:14 PM</span>
<span class="t" style="left:516.17px;top:354.70px;font-family:'Liberation Serif',serif;font-size:14.0px;font-weight:normal;color:#2b2b2b;transform:scaleX(1.0679);">5</span>
<span class="t" style="left:570.24px;top:354.70px;font-family:'Liberation Serif',serif;font-size:14.0px;font-weight:normal;color:#2b2b2b;transform:scaleX(1.0679);">7</span>
<span class="t" style="left:602.82px;top:354.70px;font-family:'Liberation Serif',serif;font-size:14.0px;font-weight:normal;color:#2b2b2b;transform:scaleX(1.0679);">2007</span>
<span class="t" style="left:652.99px;top:354.70px;font-family:'Liberation Serif',serif;font-size:14.0px;font-weight:normal;color:#2b2b2b;transform:scaleX(1.0679);">15</span>
<div class="hw" style="top:395px"></div>
<span class="t" style="left:88.23px;top:375.90px;font-family:'Liberation Serif',serif;font-size:14.0px;font-weight:normal;color:#2b2b2b;transform:scaleX(1.0679);">9</span>
<span class="t" style="left:101.85px;top:375.90px;font-family:'Liberation Serif',serif;font-size:14.0px;font-weight:normal;color:#2b2b2b;transform:scaleX(0.9659);">Rob</span>
<span class="t" style="left:171.31px;top:375.90px;font-family:'Liberation Serif',serif;font-size:14.0px;font-weight:normal;color:#2b2b2b;transform:scaleX(0.9659);">Verhoff</span>
<span class="t" style="left:240.11px;top:375.90px;font-family:'Liberation Serif',serif;font-size:14.0px;font-weight:normal;color:#2b2b2b;transform:scaleX(0.9464);">Clerical</span>
<span class="t" style="left:327.24px;top:375.90px;font-family:'Liberation Serif',serif;font-size:14.0px;font-weight:normal;color:#2b2b2b;transform:scaleX(1.0281);">9/15/2013 3:13:14 PM</span>
<span class="t" style="left:508.69px;top:375.90px;font-family:'Liberation Serif',serif;font-size:14.0px;font-weight:normal;color:#2b2b2b;transform:scaleX(1.0679);">15</span>
<span class="t" style="left:570.43px;top:375.90px;font-family:'Liberation Serif',serif;font-size:14.0px;font-weight:normal;color:#2b2b2b;transform:scaleX(1.0679);">9</span>
<span class="t" style="left:603.03px;top:375.90px;font-family:'Liberation Serif',serif;font-size:14.0px;font-weight:normal;color:#2b2b2b;transform:scaleX(1.0679);">2013</span>
<span class="t" style="left:652.99px;top:375.90px;font-family:'Liberation Serif',serif;font-size:14.0px;font-weight:normal;color:#2b2b2b;transform:scaleX(1.0679);">15</span>
<div class="alt" style="top:396px;height:20px"></div>
<div class="hb" style="top:415px"></div>
<span class="t" style="left:80.72px;top:397.00px;font-family:'Liberation Serif',serif;font-size:14.0px;font-weight:normal;color:#2b2b2b;transform:scaleX(1.0679);">10</span>
<span class="t" style="left:102.00px;top:397.00px;font-family:'Liberation Serif',serif;font-size:14.0px;font-weight:normal;color:#2b2b2b;transform:scaleX(0.9659);">Christy</span>
<span class="t" style="left:171.30px;top:397.00px;font-family:'Liberation Serif',serif;font-size:14.0px;font-weight:normal;color:#2b2b2b;transform:scaleX(0.9659);">Carlson</span>
<span class="t" style="left:239.94px;top:397.00px;font-family:'Liberation Serif',serif;font-size:14.0px;font-weight:normal;color:#2b2b2b;transform:scaleX(0.9797);">Management</span>
<span class="t" style="left:326.10px;top:397.00px;font-family:'Liberation Serif',serif;font-size:14.0px;font-weight:normal;color:#2b2b2b;transform:scaleX(1.0281);">1/25/2014 4:14:14 PM</span>
<span class="t" style="left:508.69px;top:397.00px;font-family:'Liberation Serif',serif;font-size:14.0px;font-weight:normal;color:#2b2b2b;transform:scaleX(1.0679);">25</span>
<span class="t" style="left:571.50px;top:397.00px;font-family:'Liberation Serif',serif;font-size:14.0px;font-weight:normal;color:#2b2b2b;transform:scaleX(1.0679);">1</span>
<span class="t" style="left:602.60px;top:397.00px;font-family:'Liberation Serif',serif;font-size:14.0px;font-weight:normal;color:#2b2b2b;transform:scaleX(1.0679);">2014</span>
<span class="t" style="left:652.78px;top:397.00px;font-family:'Liberation Serif',serif;font-size:14.0px;font-weight:normal;color:#2b2b2b;transform:scaleX(1.0679);">16</span>
<div class="hw" style="top:436px"></div>
<span class="t" style="left:82.02px;top:417.30px;font-family:'Liberation Serif',serif;font-size:14.0px;font-weight:normal;color:#2b2b2b;transform:scaleX(1.0679);">11</span>
<span class="t" style="left:102.00px;top:417.30px;font-family:'Liberation Serif',serif;font-size:14.0px;font-weight:normal;color:#2b2b2b;transform:scaleX(0.9659);">Gail</span>
<span class="t" style="left:171.15px;top:417.30px;font-family:'Liberation Serif',serif;font-size:14.0px;font-weight:normal;color:#2b2b2b;transform:scaleX(0.9659);">Erickson</span>
<span class="t" style="left:239.94px;top:417.30px;font-family:'Liberation Serif',serif;font-size:14.0px;font-weight:normal;color:#2b2b2b;transform:scaleX(0.9856);">Professional</span>
<span class="t" style="left:326.10px;top:417.30px;font-family:'Liberation Serif',serif;font-size:14.0px;font-weight:normal;color:#2b2b2b;transform:scaleX(1.0281);">10/2/2006 5:03:10 AM</span>
<span class="t" style="left:516.33px;top:417.30px;font-family:'Liberation Serif',serif;font-size:14.0px;font-weight:normal;color:#2b2b2b;transform:scaleX(1.0679);">2</span>
<span class="t" style="left:562.92px;top:417.30px;font-family:'Liberation Serif',serif;font-size:14.0px;font-weight:normal;color:#2b2b2b;transform:scaleX(1.0679);">10</span>
<span class="t" style="left:602.83px;top:417.30px;font-family:'Liberation Serif',serif;font-size:14.0px;font-weight:normal;color:#2b2b2b;transform:scaleX(1.0679);">2006</span>
<span class="t" style="left:660.47px;top:417.30px;font-family:'Liberation Serif',serif;font-size:14.0px;font-weight:normal;color:#2b2b2b;transform:scaleX(1.0679);">5</span>
<div class="alt" style="top:437px;height:21px"></div>
<div class="hb" style="top:457px"></div>
<span class="t" style="left:80.95px;top:438.50px;font-family:'Liberation Serif',serif;font-size:14.0px;font-weight:normal;color:#2b2b2b;transform:scaleX(1.0679);">12</span>
<span class="t" style="left:101.85px;top:438.50px;font-family:'Liberation Serif',serif;font-size:14.0px;font-weight:normal;color:#2b2b2b;transform:scaleX(0.9659);">Barry</span>
<span class="t" style="left:171.53px;top:438.50px;font-family:'Liberation Serif',serif;font-size:14.0px;font-weight:normal;color:#2b2b2b;transform:scaleX(0.9659);">Johnson</span>
<span class="t" style="left:239.94px;top:438.50px;font-family:'Liberation Serif',serif;font-size:14.0px;font-weight:normal;color:#2b2b2b;transform:scaleX(0.9797);">Management</span>
<span class="t" style="left:326.89px;top:438.50px;font-family:'Liberation Serif',serif;font-size:14.0px;font-weight:normal;color:#2b2b2b;transform:scaleX(1.0281);">5/15/2014 5:03:10 AM</span>
<span class="t" style="left:508.69px;top:438.50px;font-family:'Liberation Serif',serif;font-size:14.0px;font-weight:normal;color:#2b2b2b;transform:scaleX(1.0679);">15</span>
<span class="t" style="left:570.47px;top:438.50px;font-family:'Liberation Serif',serif;font-size:14.0px;font-weight:normal;color:#2b2b2b;transform:scaleX(1.0679);">5</span>
<span class="t" style="left:602.60px;top:438.50px;font-family:'Liberation Serif',serif;font-size:14.0px;font-weight:normal;color:#2b2b2b;transform:scaleX(1.0679);">2014</span>
<span class="t" style="left:660.47px;top:438.50px;font-family:'Liberation Serif',serif;font-size:14.0px;font-weight:normal;color:#2b2b2b;transform:scaleX(1.0679);">5</span>
<div class="hw" style="top:478px"></div>
<span class="t" style="left:80.79px;top:459.00px;font-family:'Liberation Serif',serif;font-size:14.0px;font-weight:normal;color:#2b2b2b;transform:scaleX(1.0679);">13</span>
<span class="t" style="left:101.85px;top:459.00px;font-family:'Liberation Serif',serif;font-size:14.0px;font-weight:normal;color:#2b2b2b;transform:scaleX(0.9659);">Peter</span>
<span class="t" style="left:171.15px;top:459.00px;font-family:'Liberation Serif',serif;font-size:14.0px;font-weight:normal;color:#2b2b2b;transform:scaleX(0.9659);">Krebs</span>
<span class="t" style="left:240.11px;top:459.00px;font-family:'Liberation Serif',serif;font-size:14.0px;font-weight:normal;color:#2b2b2b;transform:scaleX(0.9464);">Clerical</span>
<span class="t" style="left:326.10px;top:459.00px;font-family:'Liberation Serif',serif;font-size:14.0px;font-weight:normal;color:#2b2b2b;transform:scaleX(1.0281);">1/14/2013 5:03:10 AM</span>
<span class="t" style="left:508.25px;top:459.00px;font-family:'Liberation Serif',serif;font-size:14.0px;font-weight:normal;color:#2b2b2b;transform:scaleX(1.0679);">14</span>
<span class="t" style="left:571.50px;top:459.00px;font-family:'Liberation Serif',serif;font-size:14.0px;font-weight:normal;color:#2b2b2b;transform:scaleX(1.0679);">1</span>
<span class="t" style="left:603.03px;top:459.00px;font-family:'Liberation Serif',serif;font-size:14.0px;font-weight:normal;color:#2b2b2b;transform:scaleX(1.0679);">2013</span>
<span class="t" style="left:660.47px;top:459.00px;font-family:'Liberation Serif',serif;font-size:14.0px;font-weight:normal;color:#2b2b2b;transform:scaleX(1.0679);">5</span>
<div class="alt" style="top:479px;height:21px"></div>
<div class="hb" style="top:499px"></div>
<span class="t" style="left:80.35px;top:480.20px;font-family:'Liberation Serif',serif;font-size:14.0px;font-weight:normal;color:#2b2b2b;transform:scaleX(1.0679);">14</span>
<span class="t" style="left:102.00px;top:480.20px;font-family:'Liberation Serif',serif;font-size:14.0px;font-weight:normal;color:#2b2b2b;transform:scaleX(0.9659);">Greg</span>
<span class="t" style="left:171.20px;top:480.20px;font-family:'Liberation Serif',serif;font-size:14.0px;font-weight:normal;color:#2b2b2b;transform:scaleX(0.9659);">Alderson</span>
<span class="t" style="left:240.11px;top:480.20px;font-family:'Liberation Serif',serif;font-size:14.0px;font-weight:normal;color:#2b2b2b;transform:scaleX(0.9464);">Clerical</span>
<span class="t" style="left:326.87px;top:480.20px;font-family:'Liberation Serif',serif;font-size:14.0px;font-weight:normal;color:#2b2b2b;transform:scaleX(1.0281);">7/5/2013 5:03:10 AM</span>
<span class="t" style="left:516.17px;top:480.20px;font-family:'Liberation Serif',serif;font-size:14.0px;font-weight:normal;color:#2b2b2b;transform:scaleX(1.0679);">5</span>
<span class="t" style="left:570.24px;top:480.20px;font-family:'Liberation Serif',serif;font-size:14.0px;font-weight:normal;color:#2b2b2b;transform:scaleX(1.0679);">7</span>
<span class="t" style="left:603.03px;top:480.20px;font-family:'Liberation Serif',serif;font-size:14.0px;font-weight:normal;color:#2b2b2b;transform:scaleX(1.0679);">2013</span>
<span class="t" style="left:660.47px;top:480.20px;font-family:'Liberation Serif',serif;font-size:14.0px;font-weight:normal;color:#2b2b2b;transform:scaleX(1.0679);">5</span>
<div class="hw" style="top:520px"></div>
<span class="t" style="left:80.79px;top:501.40px;font-family:'Liberation Serif',serif;font-size:14.0px;font-weight:normal;color:#2b2b2b;transform:scaleX(1.0679);">15</span>
<span class="t" style="left:102.34px;top:501.40px;font-family:'Liberation Serif',serif;font-size:14.0px;font-weight:normal;color:#2b2b2b;transform:scaleX(0.9659);">Tutorial</span>
<span class="t" style="left:171.30px;top:501.40px;font-family:'Liberation Serif',serif;font-size:14.0px;font-weight:normal;color:#2b2b2b;transform:scaleX(0.9659);">Gateway</span>
<span class="t" style="left:239.94px;top:501.40px;font-family:'Liberation Serif',serif;font-size:14.0px;font-weight:normal;color:#2b2b2b;transform:scaleX(0.9797);">Management</span>
<span class="t" style="left:326.87px;top:501.40px;font-family:'Liberation Serif',serif;font-size:14.0px;font-weight:normal;color:#2b2b2b;transform:scaleX(1.0281);">7/5/2005 5:03:10 AM</span>
<span class="t" style="left:516.17px;top:501.40px;font-family:'Liberation Serif',serif;font-size:14.0px;font-weight:normal;color:#2b2b2b;transform:scaleX(1.0679);">5</span>
<span class="t" style="left:570.24px;top:501.40px;font-family:'Liberation Serif',serif;font-size:14.0px;font-weight:normal;color:#2b2b2b;transform:scaleX(1.0679);">7</span>
<span class="t" style="left:603.04px;top:501.40px;font-family:'Liberation Serif',serif;font-size:14.0px;font-weight:normal;color:#2b2b2b;transform:scaleX(1.0679);">2005</span>
<span class="t" style="left:660.47px;top:501.40px;font-family:'Liberation Serif',serif;font-size:14.0px;font-weight:normal;color:#2b2b2b;transform:scaleX(1.0679);">5</span>
<div class="tot" style="top:521px"></div>
<span class="t" style="left:62.65px;top:521.50px;font-family:'Liberation Serif',serif;font-size:14.0px;font-weight:bold;color:#fff;transform:scaleX(1.1000);">Total</span>
<span class="t" style="left:501.28px;top:521.50px;font-family:'Liberation Serif',serif;font-size:14.0px;font-weight:bold;color:#fff;transform:scaleX(1.1000);">240</span>
<span class="t" style="left:555.47px;top:521.50px;font-family:'Liberation Serif',serif;font-size:14.0px;font-weight:bold;color:#fff;transform:scaleX(1.1000);">108</span>
<span class="t" style="left:595.18px;top:521.50px;font-family:'Liberation Serif',serif;font-size:14.0px;font-weight:bold;color:#fff;transform:scaleX(1.1000);">30150</span>
<span class="t" style="left:645.43px;top:521.50px;font-family:'Liberation Serif',serif;font-size:14.0px;font-weight:bold;color:#fff;transform:scaleX(1.1000);">186</span>
<div class="vl" style="left:99px"></div>
<div class="vlh" style="left:99px"></div>
<div class="vlt" style="left:99px;top:521px"></div>
<div class="vl" style="left:167px"></div>
<div class="vlh" style="left:167px"></div>
<div class="vl" style="left:237px"></div>
<div class="vlh" style="left:237px"></div>
<div class="vlt" style="left:237px;top:521px"></div>
<div class="vl" style="left:324px"></div>
<div class="vlh" style="left:324px"></div>
<div class="vlt" style="left:324px;top:521px"></div>
<div class="vl" style="left:474px"></div>
<div class="vlh" style="left:474px"></div>
<div class="vlt" style="left:474px;top:521px"></div>
<div class="vl" style="left:527px"></div>
<div class="vlh" style="left:527px"></div>
<div class="vlt" style="left:527px;top:521px"></div>
<div class="vl" style="left:581px"></div>
<div class="vlh" style="left:581px"></div>
<div class="vlt" style="left:581px;top:521px"></div>
<div class="vl" style="left:636px"></div>
<div class="vlh" style="left:636px"></div>
<div class="vlt" style="left:636px;top:521px"></div>
<!-- formula buttons -->
<svg style="left:60px;top:132px" width="16" height="15" viewBox="0 0 16 15"><path d="M1.200 1.200l13.300 12.500M14.500 1.200l-13.300 12.500" stroke="#c9c9c9" stroke-width="2.200" fill="none"/></svg>
<svg style="left:98px;top:132px" width="16" height="14" viewBox="0 0 16 14"><path d="M1.200 7.500l4.800 5 8.500-11.500" stroke="#c9c9c9" stroke-width="2.300" fill="none"/></svg>
<svg style="left:722px;top:135px" width="14" height="9" viewBox="0 0 14 9"><path d="M1.700 1.700l5.100 5.100 5.100-5.100" stroke="#666" stroke-width="2" fill="none"/></svg>
<div style="left:51px;top:155px;width:687px;height:1px;background:#d2d2d2"></div>
<div style="left:44px;top:154px;width:7px;height:405px;background:linear-gradient(90deg,#e9e9e9,#dedede)"></div>
<div style="left:51px;top:155px;width:1px;height:404px;background:#d4d4d4"></div><!-- visleft -->
<div style="left:738px;top:154px;width:7px;height:405px;background:linear-gradient(90deg,#dcdcdc,#e8e8e8)"></div>
<div style="left:736px;top:155px;width:1px;height:404px;background:#cdcdcd"></div>
<!-- visual handles -->
<svg style="left:51px;top:154px" width="9" height="10" viewBox="0 0 9 10"><path d="M0 0h9v4h-5.500v6h-3.500z" fill="#8f8f8f"/></svg>
<svg style="left:728px;top:154px" width="10" height="10" viewBox="0 0 10 10"><path d="M0 0h10v10h-4v-6h-6z" fill="#8f8f8f"/></svg>
<svg style="left:51px;top:551px" width="9" height="9" viewBox="0 0 9 9"><path d="M0 0h3.500v5.500h5.500v3.500h-9z" fill="#8f8f8f"/></svg>
<svg style="left:728px;top:551px" width="10" height="9" viewBox="0 0 10 9"><path d="M6 0h4v9h-10v-3.500h6z" fill="#8f8f8f"/></svg>
<div class="hd" style="left:388px;top:154px;width:12px;height:3px"></div>
<div class="hd" style="left:388px;top:557px;width:12px;height:3px"></div>
<div class="hd" style="left:51px;top:351px;width:3px;height:11px"></div>
<div class="hd" style="left:734px;top:351px;width:4px;height:11px"></div>
<!-- header icons -->
<div style="left:385px;top:161px;width:17px;height:1px;background:#8a8a8a"></div>
<div style="left:385px;top:165px;width:17px;height:1px;background:#8a8a8a"></div>
<svg style="left:690px;top:158px" width="14" height="12" viewBox="0 0 14 12"><path d="M7.500 .6h-6.900v10.800h12.800v-5.400" fill="none" stroke="#8a8a8a" stroke-width="1.200"/><path d="M.6 6.800h6.700v4.600M8.600 5.300l4.500-4.500M9.600 .6h3.800v3.800" fill="none" stroke="#8a8a8a" stroke-width="1.100"/></svg>
<svg style="left:713px;top:162px" width="17" height="4" viewBox="0 0 17 4"><circle cx="2" cy="2" r="1.300" fill="#777"/><circle cx="8.300" cy="2" r="1.300" fill="#777"/><circle cx="14.600" cy="2" r="1.300" fill="#777"/></svg>
<!-- annotation arrows -->
<svg style="left:426px;top:118px" width="38" height="38" viewBox="0 0 38 38"><path d="M5.300 18.400L18.800 5.800V10.900H33.300V25.500H18.800V31.200Z" fill="none" stroke="#7d1018" stroke-width="3" stroke-linejoin="miter"/></svg>
<svg style="left:630px;top:141px" width="40" height="42" viewBox="0 0 40 42"><path d="M20.050 37.900L6.300 20.850H12.450V3.550H27.550V20.850H33.800Z" fill="none" stroke="#7d1018" stroke-width="2.700" stroke-linejoin="miter"/></svg>
<svg style="left:698px;top:385px" width="42" height="40" viewBox="0 0 42 40"><path d="M37 20.600L20.600 35.300V28.500H3.500V12.200H20.600V6.200Z" fill="none" stroke="#7d1018" stroke-width="2.800" stroke-linejoin="miter"/></svg>
<!-- page tabs strip -->
<div style="left:43px;top:593px;width:702px;height:2px;background:#f7f7f7"></div>
<div style="left:467px;top:593px;width:160px;height:2px;background:#fff"></div>
<div style="left:587px;top:593px;width:40px;height:2px;background:#f2c811"></div>
<div style="left:77px;top:593px;width:1px;height:2px;background:#c8c8c8"></div>
<div style="left:176px;top:593px;width:1px;height:2px;background:#c8c8c8"></div>
<div style="left:330px;top:593px;width:1px;height:2px;background:#c8c8c8"></div>
<div style="left:466px;top:593px;width:1px;height:2px;background:#c8c8c8"></div>

<!-- right -->
<div id="viz"></div><div id="vdiv"></div>
<div id="fp"></div><div id="fh"></div>
<div id="sb"></div>
<div id="fband"></div><div id="frow"></div>
<div class="fld" style="top:245px"></div>
<div class="cb on" style="top:250px"></div><svg style="left:813px;top:250px" width="12" height="12" viewBox="0 0 12 12"><path d="M2.400 6.300l2.500 2.700 4.700-5.800" stroke="#1f1f1f" stroke-width="1.500" fill="none"/></svg>
<svg style="left:828px;top:250px" width="13" height="12" viewBox="0 0 13 12"><rect width="13" height="12" fill="#adadad"/><rect x=".5" y=".3" width="12" height="2" fill="#bcbcbc"/><rect x="1" y="3" width="2.600" height="8.500" fill="#d3d3d3"/><rect x="5" y="3.200" width="7.500" height="8.300" fill="#fff"/><path d="M11.800 5h-4.800l2.700 2.600-2.700 2.600h4.800" fill="none" stroke="#1f1f1f" stroke-width="1.150"/></svg>
<span class="t" style="left:845.74px;top:245.60px;font-family:'Liberation Sans',sans-serif;font-size:12px;font-weight:normal;color:#fff;transform:scaleX(1.0104);">DayinDt</span>
<div class="fld" style="top:267px"></div>
<div class="cb" style="top:272px"></div>
<span class="t" style="left:845.76px;top:267.60px;font-family:'Liberation Sans',sans-serif;font-size:12px;font-weight:normal;color:#fff;transform:scaleX(0.9862);">Education</span>
<div class="fld" style="top:289px"></div>
<div class="cb on" style="top:294px"></div><svg style="left:813px;top:294px" width="12" height="12" viewBox="0 0 12 12"><path d="M2.400 6.300l2.500 2.700 4.700-5.800" stroke="#1f1f1f" stroke-width="1.500" fill="none"/></svg>
<span class="t" style="left:829.61px;top:290.80px;font-family:'Liberation Serif',serif;font-size:14px;font-weight:normal;color:#a9a9a9;transform:scaleX(1.2439);">&#931;</span>
<span class="t" style="left:845.76px;top:289.60px;font-family:'Liberation Sans',sans-serif;font-size:12px;font-weight:normal;color:#fff;transform:scaleX(0.9823);">EmpID</span>
<div class="fld" style="top:311px"></div>
<div class="cb on" style="top:316px"></div><svg style="left:813px;top:316px" width="12" height="12" viewBox="0 0 12 12"><path d="M2.400 6.300l2.500 2.700 4.700-5.800" stroke="#1f1f1f" stroke-width="1.500" fill="none"/></svg>
<span class="t" style="left:845.76px;top:311.60px;font-family:'Liberation Sans',sans-serif;font-size:12px;font-weight:normal;color:#fff;transform:scaleX(0.9825);">FirstName</span>
<div class="fld" style="top:333px"></div>
<div class="cb on" style="top:338px"></div><svg style="left:813px;top:338px" width="12" height="12" viewBox="0 0 12 12"><path d="M2.400 6.300l2.500 2.700 4.700-5.800" stroke="#1f1f1f" stroke-width="1.500" fill="none"/></svg>
<span class="t" style="left:845.75px;top:333.60px;font-family:'Liberation Sans',sans-serif;font-size:12px;font-weight:normal;color:#fff;">HireDate</span>
<div class="fld" style="top:355px"></div>
<div class="cb on" style="top:360px"></div><svg style="left:813px;top:360px" width="12" height="12" viewBox="0 0 12 12"><path d="M2.400 6.300l2.500 2.700 4.700-5.800" stroke="#1f1f1f" stroke-width="1.500" fill="none"/></svg>
<svg style="left:828px;top:360px" width="13" height="12" viewBox="0 0 13 12"><rect width="13" height="12" fill="#adadad"/><rect x=".5" y=".3" width="12" height="2" fill="#bcbcbc"/><rect x="1" y="3" width="2.600" height="8.500" fill="#d3d3d3"/><rect x="5" y="3.200" width="7.500" height="8.300" fill="#fff"/><path d="M11.800 5h-4.800l2.700 2.600-2.700 2.600h4.800" fill="none" stroke="#1f1f1f" stroke-width="1.150"/></svg>
<span class="t" style="left:845.72px;top:355.60px;font-family:'Liberation Sans',sans-serif;font-size:12px;font-weight:normal;color:#fff;transform:scaleX(1.0306);">Hour</span>
<div class="fld" style="top:377px"></div>
<div class="cb on" style="top:382px"></div><svg style="left:813px;top:382px" width="12" height="12" viewBox="0 0 12 12"><path d="M2.400 6.300l2.500 2.700 4.700-5.800" stroke="#1f1f1f" stroke-width="1.500" fill="none"/></svg>
<span class="t" style="left:845.77px;top:377.60px;font-family:'Liberation Sans',sans-serif;font-size:12px;font-weight:normal;color:#fff;transform:scaleX(0.9763);">LastName</span>
<div class="fld sel" style="top:399px"></div>
<div class="cb" style="top:404px"></div>
<svg style="left:828px;top:404px" width="13" height="12" viewBox="0 0 13 12"><rect width="13" height="12" fill="#adadad"/><rect x=".5" y=".3" width="12" height="2" fill="#bcbcbc"/><rect x="1" y="3" width="2.600" height="8.500" fill="#d3d3d3"/><rect x="5" y="3.200" width="7.500" height="8.300" fill="#fff"/><path d="M11.800 5h-4.800l2.700 2.600-2.700 2.600h4.800" fill="none" stroke="#1f1f1f" stroke-width="1.150"/></svg>
<span class="t" style="left:845.67px;top:399.60px;font-family:'Liberation Sans',sans-serif;font-size:12px;font-weight:normal;color:#fff;transform:scaleX(1.0933);">Min</span>
<div class="fld" style="top:421px"></div>
<div class="cb on" style="top:426px"></div><svg style="left:813px;top:426px" width="12" height="12" viewBox="0 0 12 12"><path d="M2.400 6.300l2.500 2.700 4.700-5.800" stroke="#1f1f1f" stroke-width="1.500" fill="none"/></svg>
<svg style="left:828px;top:426px" width="13" height="12" viewBox="0 0 13 12"><rect width="13" height="12" fill="#adadad"/><rect x=".5" y=".3" width="12" height="2" fill="#bcbcbc"/><rect x="1" y="3" width="2.600" height="8.500" fill="#d3d3d3"/><rect x="5" y="3.200" width="7.500" height="8.300" fill="#fff"/><path d="M11.800 5h-4.800l2.700 2.600-2.700 2.600h4.800" fill="none" stroke="#1f1f1f" stroke-width="1.150"/></svg>
<span class="t" style="left:845.70px;top:421.60px;font-family:'Liberation Sans',sans-serif;font-size:12px;font-weight:normal;color:#fff;transform:scaleX(1.0556);">MoninDt</span>
<div class="fld" style="top:443px"></div>
<div class="cb" style="top:448px"></div>
<span class="t" style="left:829.61px;top:444.80px;font-family:'Liberation Serif',serif;font-size:14px;font-weight:normal;color:#a9a9a9;transform:scaleX(1.2439);">&#931;</span>
<span class="t" style="left:845.78px;top:443.60px;font-family:'Liberation Sans',sans-serif;font-size:12px;font-weight:normal;color:#fff;transform:scaleX(0.9631);">NewSale</span>
<div class="fld" style="top:465px"></div>
<div class="cb on" style="top:470px"></div><svg style="left:813px;top:470px" width="12" height="12" viewBox="0 0 12 12"><path d="M2.400 6.300l2.500 2.700 4.700-5.800" stroke="#1f1f1f" stroke-width="1.500" fill="none"/></svg>
<span class="t" style="left:846.11px;top:465.60px;font-family:'Liberation Sans',sans-serif;font-size:12px;font-weight:normal;color:#fff;">Occupation</span>
<div class="fld" style="top:487px"></div>
<div class="cb" style="top:492px"></div>
<span class="t" style="left:829.61px;top:488.80px;font-family:'Liberation Serif',serif;font-size:14px;font-weight:normal;color:#a9a9a9;transform:scaleX(1.2439);">&#931;</span>
<span class="t" style="left:845.93px;top:487.60px;font-family:'Liberation Sans',sans-serif;font-size:12px;font-weight:normal;color:#fff;transform:scaleX(0.9102);">Sales</span>
<div class="fld" style="top:509px"></div>
<div class="cb" style="top:514px"></div>
<svg style="left:828px;top:514px" width="13" height="12" viewBox="0 0 13 12"><rect x="2.500" y="0" width="8.500" height="12" fill="#c0c0c0"/><rect x="4" y="1.500" width="5.500" height="2.200" fill="#5c5c5c"/><g fill="#5c5c5c"><rect x="4" y="5" width="1.400" height="1.400"/><rect x="6" y="5" width="1.400" height="1.400"/><rect x="8.100" y="5" width="1.400" height="1.400"/><rect x="4" y="7.200" width="1.400" height="1.400"/><rect x="6" y="7.200" width="1.400" height="1.400"/><rect x="8.100" y="7.200" width="1.400" height="1.400"/><rect x="4" y="9.400" width="1.400" height="1.400"/><rect x="6" y="9.400" width="1.400" height="1.400"/><rect x="8.100" y="9.400" width="1.400" height="1.400"/></g></svg>
<span class="t" style="left:845.90px;top:509.60px;font-family:'Liberation Sans',sans-serif;font-size:12px;font-weight:normal;color:#fff;transform:scaleX(0.9421);">SalesIN</span>
<div class="fld" style="top:531px"></div>
<div class="cb" style="top:536px"></div>
<svg style="left:828px;top:536px" width="13" height="12" viewBox="0 0 13 12"><rect width="13" height="12" fill="#adadad"/><rect x=".5" y=".3" width="12" height="2" fill="#bcbcbc"/><rect x="1" y="3" width="2.600" height="8.500" fill="#d3d3d3"/><rect x="5" y="3.200" width="7.500" height="8.300" fill="#fff"/><path d="M10.500 2.200c-1.500-.3-2 .6-2.300 2l-1.300 6.300c-.2.900-.8 1.200-1.800 1M6.500 6h3.500M9.300 7.800l3 3.400M12.300 7.800l-3 3.400" stroke="#1f1f1f" stroke-width="1.100" fill="none"/></svg>
<span class="t" style="left:846.48px;top:531.60px;font-family:'Liberation Sans',sans-serif;font-size:12px;font-weight:normal;color:#fff;transform:scaleX(0.9485);">Today</span>
<div class="fld" style="top:553px"></div>
<div class="cb on" style="top:558px"></div><svg style="left:813px;top:558px" width="12" height="12" viewBox="0 0 12 12"><path d="M2.400 6.300l2.500 2.700 4.700-5.800" stroke="#1f1f1f" stroke-width="1.500" fill="none"/></svg>
<svg style="left:828px;top:558px" width="13" height="12" viewBox="0 0 13 12"><rect width="13" height="12" fill="#adadad"/><rect x=".5" y=".3" width="12" height="2" fill="#bcbcbc"/><rect x="1" y="3" width="2.600" height="8.500" fill="#d3d3d3"/><rect x="5" y="3.200" width="7.500" height="8.300" fill="#fff"/><path d="M11.800 5h-4.800l2.700 2.600-2.700 2.600h4.800" fill="none" stroke="#1f1f1f" stroke-width="1.150"/></svg>
<span class="t" style="left:846.14px;top:553.60px;font-family:'Liberation Sans',sans-serif;font-size:12px;font-weight:normal;color:#fff;transform:scaleX(0.9568);">YearInDt</span>
<div class="fld" style="top:575px"></div>
<div class="cb" style="top:580px"></div>
<span class="t" style="left:829.61px;top:576.80px;font-family:'Liberation Serif',serif;font-size:14px;font-weight:normal;color:#a9a9a9;transform:scaleX(1.2439);">&#931;</span>
<span class="t" style="left:846.13px;top:575.60px;font-family:'Liberation Sans',sans-serif;font-size:12px;font-weight:normal;color:#fff;transform:scaleX(0.9722);">YearlyIncome</span>
<span class="t" style="left:790.82px;top:135.20px;font-family:'Liberation Sans',sans-serif;font-size:14.5px;font-weight:bold;color:#fff;transform:scaleX(0.9200);">FIELDS</span>
<span class="t" style="left:818.22px;top:179.10px;font-family:'Liberation Sans',sans-serif;font-size:12.5px;font-weight:normal;color:#c8c8c8;transform:scaleX(0.9956);">Search</span>
<span class="t" style="left:828.90px;top:219.40px;font-family:'Liberation Sans',sans-serif;font-size:12.5px;font-weight:normal;color:#f3bc2f;transform:scaleX(0.9119);">EmployeeSales</span>
<svg style="left:758px;top:138px" width="9" height="14" viewBox="0 0 9 14"><path d="M7.500 1l-6 6 6 6" fill="none" stroke="#c8c8c8" stroke-width="1.400"/></svg>
<svg style="left:924px;top:138px" width="9" height="14" viewBox="0 0 9 14"><path d="M1.500 1l6 6-6 6" fill="none" stroke="#c8c8c8" stroke-width="1.400"/></svg>
<svg style="left:794px;top:179px" width="18" height="17" viewBox="0 0 18 17"><circle cx="10.800" cy="6.300" r="5" fill="none" stroke="#c8c8c8" stroke-width="1.300"/><path d="M7.300 10l-6 6" stroke="#c8c8c8" stroke-width="1.400"/></svg>
<svg style="left:788px;top:225px" width="7" height="7" viewBox="0 0 7 7"><path d="M6.500 0v6.500h-6.500z" fill="#c4c4c4"/></svg>
<svg style="left:804px;top:223px" width="13" height="12" viewBox="0 0 13 12"><rect width="13" height="12" fill="#e8e8e8"/><path d="M0 3.500h13M0 6.300h13M0 9.100h13M4.300 3.500v8.500M8.700 3.500v8.500" stroke="#2c2b2a" stroke-width="1" fill="none"/></svg>
<span class="vt" style="left:772px;top:183px;font-size:15.5px;letter-spacing:.2px;transform:rotate(90deg) scaleX(.84)">VISUALIZATIONS</span>
<span class="vt" style="left:772px;top:312px;font-size:15.5px;letter-spacing:.2px;transform:rotate(90deg) scaleX(.85)">FILTERS</span>

</div>
</body>
</html>
